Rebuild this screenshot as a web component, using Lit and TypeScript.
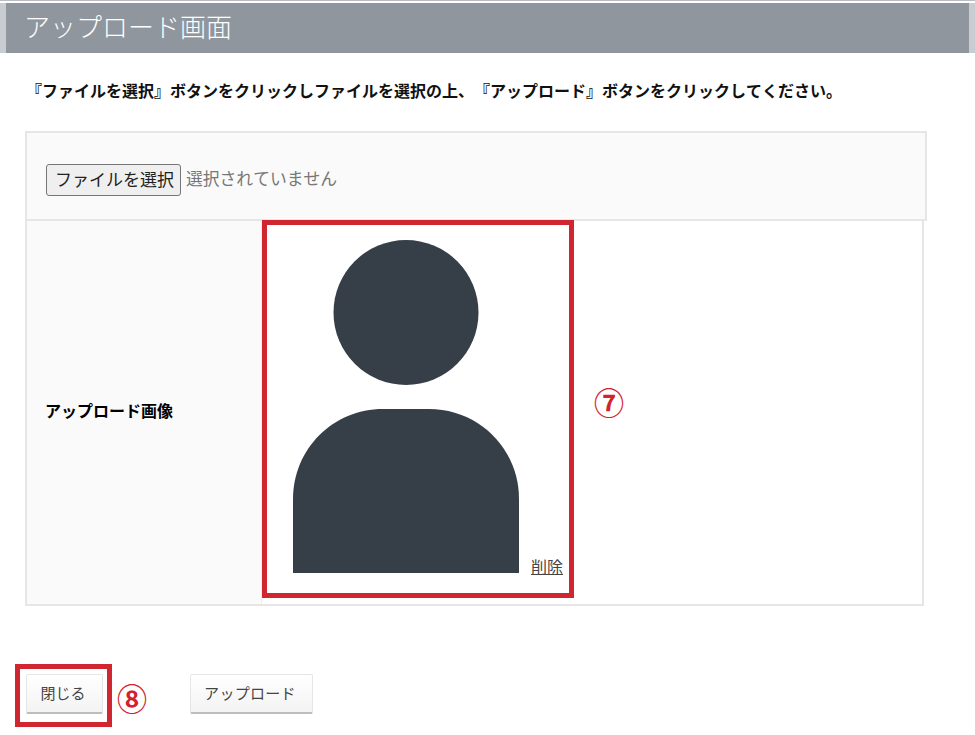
import { LitElement, html, css } from "lit";
import { customElement } from "lit/decorators.js";

@customElement("app-root")
export class AppRoot extends LitElement {
  static styles = css`
    :host {
      display: block;
      position: relative;
      width: 975px;
      height: 735px;
      overflow: hidden;
      background: #fff;
      color: #000;
      font-family: "Noto Sans CJK JP", "Noto Sans", sans-serif;
      text-spacing-trim: space-all;
      font-kerning: none;
    }
    .topline { height: 1px; background: #b9bcc0; margin-bottom: 2px; }
    .header { height: 50px; background: #c9cdd2; padding: 0 6px; }
    .header-inner {
      height: 50px;
      background: #8f969d;
      color: #fdfdfd;
      font-size: 26px;
      font-weight: 300;
      line-height: 46px;
      padding-left: 18px;
    }
    .lead {
      margin: 0;
      padding: 26px 0 0 26px;
      font-size: 16px;
      font-weight: 700;
      line-height: 23px;
      height: 52px;
      box-sizing: content-box;
      color: #111;
      white-space: nowrap;
    }
    .table { margin-left: 25px; }
    .file-row {
      box-sizing: border-box;
      width: 902px;
      height: 90px;
      background: #fafafa;
      border: 2px solid #e6e6e6;
      display: flex;
      align-items: center;
      gap: 5px;
      padding: 7px 0 0 19px;
    }
    .file-btn {
      box-sizing: border-box;
      width: 135px;
      height: 32px;
      padding: 0 0 2px 2px;
      background: #efefef;
      border: 1px solid #767676;
      border-radius: 3px;
      color: #222;
      font: 400 17px/1 "Noto Sans CJK JP", sans-serif;
    }
    .file-none { color: #777; font-size: 16.8px; line-height: 24px; position: relative; top: -2px; }
    .image-row {
      box-sizing: border-box;
      width: 899px;
      height: 387px;
      margin-top: -2px;
      display: grid;
      grid-template-columns: 235px 1fr;
      border: 2px solid #e6e6e6;
    }
    .label {
      background: #fafafa;
      border-right: 1px solid #eeeeee;
      display: flex;
      align-items: center;
      padding: 0 0 5px 18px;
      font-size: 16px;
      font-weight: 700;
    }
    .image-cell {
      display: flex;
      align-items: flex-end;
      padding: 0 0 31px 31px;
      gap: 12px;
    }
    .avatar { display: block; width: 226px; height: 334px; flex: none; }
    .del {
      color: #444;
      font-size: 16px;
      line-height: 16px;
      text-decoration: underline;
      margin-bottom: -1px;
    }
    .actions {
      display: flex;
      gap: 87px;
      padding: 68px 0 0 26px;
    }
    .btn {
      box-sizing: border-box;
      height: 40px;
      background: linear-gradient(#ffffff, #f3f3f3);
      border: 1px solid #e6e6e6;
      border-bottom: 2px solid #bdbdbd;
      border-radius: 2px;
      color: #444;
      font: 400 15px/1 "Noto Sans CJK JP", sans-serif;
      padding: 0 3px 2px 0;
    }
    .btn.close { width: 77px; }
    .btn.upload { width: 123px; letter-spacing: 0.3px; }
    .mark {
      position: absolute;
      box-sizing: border-box;
      border: 5px solid #cf2630;
    }
    .mark.image { left: 262px; top: 220px; width: 312px; height: 378px; }
    .mark.close { left: 15px; top: 664px; width: 97px; height: 63px; }
    .num {
      position: absolute;
      color: #d3222c;
      font-size: 30px;
      font-weight: 700;
      line-height: 30px;
    }
    .num.seven { left: 594px; top: 386px; }
    .num.eight { left: 117px; top: 682px; }
  `;

  render() {
    return html`
      <div class="topline"></div>
      <div class="header"><div class="header-inner">アップロード画面</div></div>
      <p class="lead">『ファイルを選択』ボタンをクリックしファイルを選択の上、『アップロード』ボタンをクリックしてください。</p>
      <div class="table">
        <div class="file-row">
          <button class="file-btn">ファイルを選択</button>
          <span class="file-none">選択されていません</span>
        </div>
        <div class="image-row">
          <div class="label"><span>アップロード画像</span></div>
          <div class="image-cell">
            <svg class="avatar" viewBox="0 0 226 334" aria-hidden="true">
              <circle cx="113" cy="73.5" r="72.5" fill="#363f48"></circle>
              <path d="M0 334V260C0 210 40 170 90 170H136C186 170 226 210 226 260V334Z" fill="#363f48"></path>
            </svg>
            <a class="del">削除</a>
          </div>
        </div>
      </div>
      <div class="actions">
        <button class="btn close">閉じる</button>
        <button class="btn upload">アップロード</button>
      </div>
      <div class="mark image"></div>
      <div class="mark close"></div>
      <div class="num seven">⑦</div>
      <div class="num eight">⑧</div>
    `;
  }
}
